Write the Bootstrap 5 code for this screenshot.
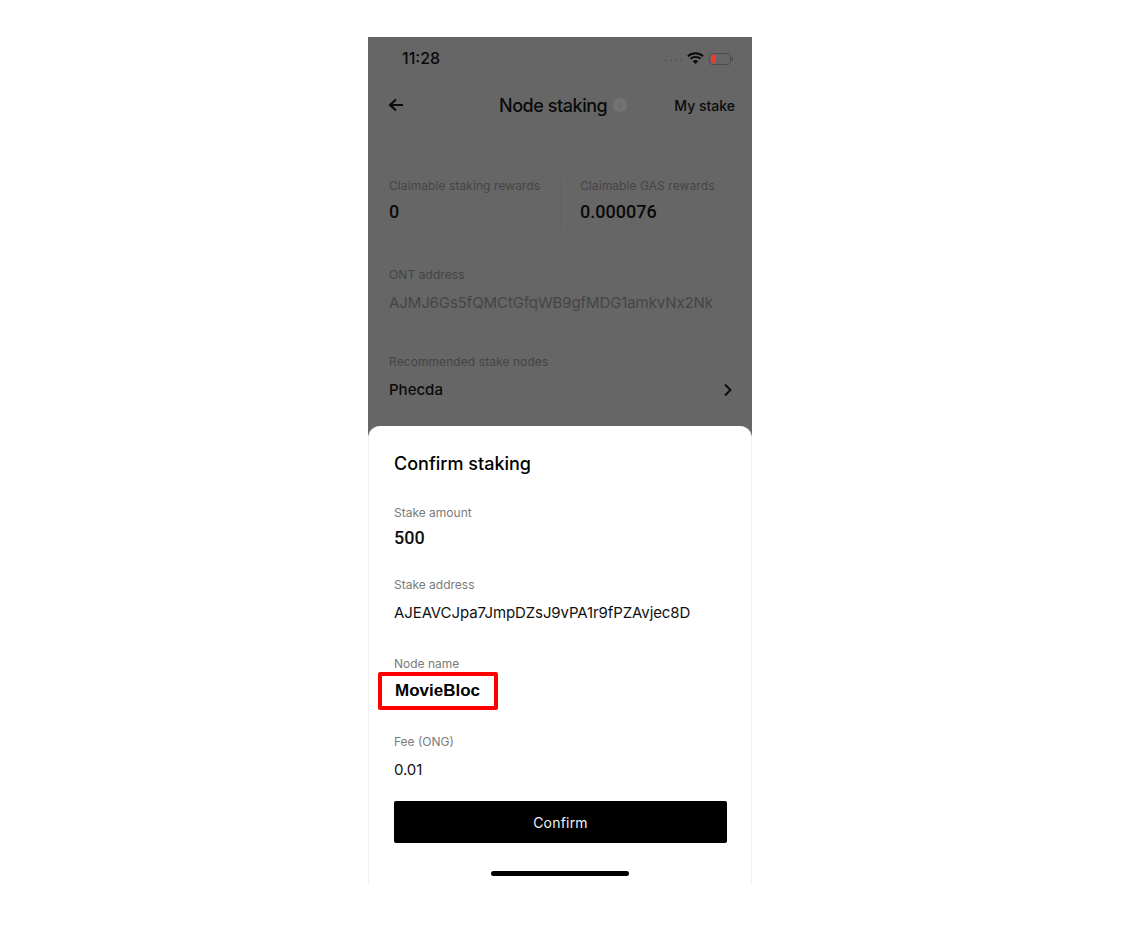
<!DOCTYPE html>
<html lang="en">
<head>
    <meta charset="UTF-8">
    <meta name="viewport" content="width=device-width, initial-scale=1.0">
    <title>Node staking</title>
    <link href="https://cdn.jsdelivr.net/npm/bootstrap@5.3.3/dist/css/bootstrap.min.css" rel="stylesheet">
    <style>
        html, body { background: #fff; }
        body { font-family: Inter, "Liberation Sans", sans-serif; color: #000; }
        .phone { width: 384px; height: 847px; margin: 37px 0 0 368px; background: #666; overflow: hidden; }
        .status-row { height: 42px; padding: 0 18px 0 34px; color: #0a0a0a; font-size: 16px; font-weight: 500; }
        .nav-row { height: 52px; padding: 0 17px 0 20px; position: relative; }
        .nav-title { font-size: 18px; font-weight: 500; color: #0a0a0a; letter-spacing: -.45px; }
        .nav-title-wrap { position: absolute; left: 131px; top: 0; height: 52px; }
        .info-dot { width: 14px; height: 14px; border-radius: 50%; background: #737373; color: #666; font-size: 10px; line-height: 14px; text-align: center; margin-left: 6px; }
        .my-stake { font-size: 14px; font-weight: 500; color: #0a0a0a; }
        .stats-row { margin-top: 46px; padding: 0 21px; height: 54px; }
        .stat-left { width: 172px; border-right: 1px solid #626262; }
        .stat-right { padding-left: 19px; }
        .dim-label { font-size: 12px; line-height: 18px; color: #454545; letter-spacing: .08px; }
        .num-big { font-family: Roboto, sans-serif; font-size: 18px; line-height: 26px; font-weight: 500; color: #0a0a0a; margin-top: 4px; }
        .field-block { padding: 0 21px; }
        .ont-block { margin-top: 35px; }
        .node-block { margin-top: 30px; }
        .addr-dim { font-size: 15px; line-height: 22px; color: #454545; margin-top: 8px; padding-bottom: 8px; border-bottom: 1px solid #626262; letter-spacing: -.1px; }
        .node-row { font-size: 15px; line-height: 22px; font-weight: 500; color: #0a0a0a; margin-top: 8px; }
        .node-chevron { margin-right: -2px; }
        .sheet { height: 458px; background: #fff; border-radius: 12px 12px 0 0; padding: 0 25px; border-left: 1px solid #f0f0f0; border-right: 1px solid #f0f0f0; }
        .sheet-title { font-size: 18px; line-height: 26px; font-weight: 500; padding-top: 25px; box-sizing: content-box; height: 26px; }
        .sheet-label { font-size: 12px; line-height: 18px; color: #7b7b7b; }
        .label-amount { margin-top: 27px; }
        .label-address { margin-top: 25px; }
        .label-node { margin-top: 31px; }
        .label-fee { margin-top: 23px; }
        .sheet-num { font-family: Roboto, sans-serif; font-size: 18px; line-height: 26px; font-weight: 500; color: #111; margin-top: 3px; }
        .sheet-val { font-size: 15px; line-height: 22px; color: #111; margin-top: 8px; letter-spacing: -.1px; }
        .red-box { width: 120px; height: 38px; margin: -1px 0 0 -16px; border: 4px solid #f00; border-radius: 2px; font-family: "Liberation Sans", Arial, sans-serif; font-weight: 700; font-size: 17px; line-height: 30px; padding-left: 13px; color: #000; }
        .confirm-btn { width: 333px; height: 42px; margin-top: 20px; border-radius: 2px; background: #000; border: 0; color: #f2f2f2; font-size: 14px; font-weight: 400; letter-spacing: .2px; padding: 0; }
        .confirm-btn:hover { background: #000; color: #f2f2f2; }
        .home-bar { width: 138px; height: 5px; border-radius: 3px; background: #000; margin: 28px auto 0; }
    </style>
</head>
<body class="m-0">
    <div class="phone d-flex flex-column">
        <div class="status-row d-flex align-items-center justify-content-between">
            <span>11:28</span>
            <svg width="70" height="14" viewBox="0 0 70 14">
                <g fill="#555"><circle cx="2" cy="9.500" r="1"/><circle cx="7" cy="9.500" r="1"/><circle cx="12" cy="9.500" r="1"/><circle cx="17" cy="9.500" r="1"/></g>
                <path d="M24 5.200a11 11 0 0 1 15 0M26.500 7.800a7.400 7.400 0 0 1 10 0" fill="none" stroke="#0a0a0a" stroke-width="1.900"/>
                <path d="M28.800 10.200a4 4 0 0 1 5.400 0L31.500 13z" fill="#0a0a0a"/>
                <rect x="45.500" y="2.500" width="21" height="11" rx="3" fill="none" stroke="#4d4d4d"/>
                <rect x="47" y="4" width="5" height="8" rx="1" fill="#f0392b"/>
                <rect x="67.500" y="6" width="1.500" height="4" rx=".7" fill="#4d4d4d"/>
            </svg>
        </div>
        <div class="nav-row d-flex align-items-center justify-content-between">
            <svg width="16" height="14" viewBox="0 0 16 14"><path d="M15 7H2.500M8 1.500 2 7l6 5.500" fill="none" stroke="#0a0a0a" stroke-width="2.200"/></svg>
            <div class="nav-title-wrap d-flex align-items-center">
                <span class="nav-title">Node staking</span>
                <span class="info-dot">i</span>
            </div>
            <span class="my-stake">My stake</span>
        </div>
        <div class="stats-row d-flex">
            <div class="stat-left">
                <div class="dim-label">Claimable staking rewards</div>
                <div class="num-big">0</div>
            </div>
            <div class="stat-right">
                <div class="dim-label">Claimable GAS rewards</div>
                <div class="num-big">0.000076</div>
            </div>
        </div>
        <div class="field-block ont-block">
            <div class="dim-label">ONT address</div>
            <div class="addr-dim">AJMJ6Gs5fQMCtGfqWB9gfMDG1amkvNx2Nk</div>
        </div>
        <div class="field-block node-block">
            <div class="dim-label">Recommended stake nodes</div>
            <div class="node-row d-flex align-items-center justify-content-between">
                <span>Phecda</span>
                <svg class="node-chevron" width="10" height="14" viewBox="0 0 10 14"><path d="M2 1.500 7.500 7 2 12.500" fill="none" stroke="#0a0a0a" stroke-width="1.800"/></svg>
            </div>
        </div>
        <div class="sheet mt-auto">
            <div class="sheet-title">Confirm staking</div>
            <div class="sheet-label label-amount">Stake amount</div>
            <div class="sheet-num">500</div>
            <div class="sheet-label label-address">Stake address</div>
            <div class="sheet-val">AJEAVCJpa7JmpDZsJ9vPA1r9fPZAvjec8D</div>
            <div class="sheet-label label-node">Node name</div>
            <div class="red-box">MovieBloc</div>
            <div class="sheet-label label-fee">Fee (ONG)</div>
            <div class="sheet-val">0.01</div>
            <button class="btn confirm-btn d-block">Confirm</button>
            <div class="home-bar"></div>
        </div>
    </div>
    <script src="https://cdn.jsdelivr.net/npm/bootstrap@5.3.3/dist/js/bootstrap.bundle.min.js"></script>
</body>
</html>
